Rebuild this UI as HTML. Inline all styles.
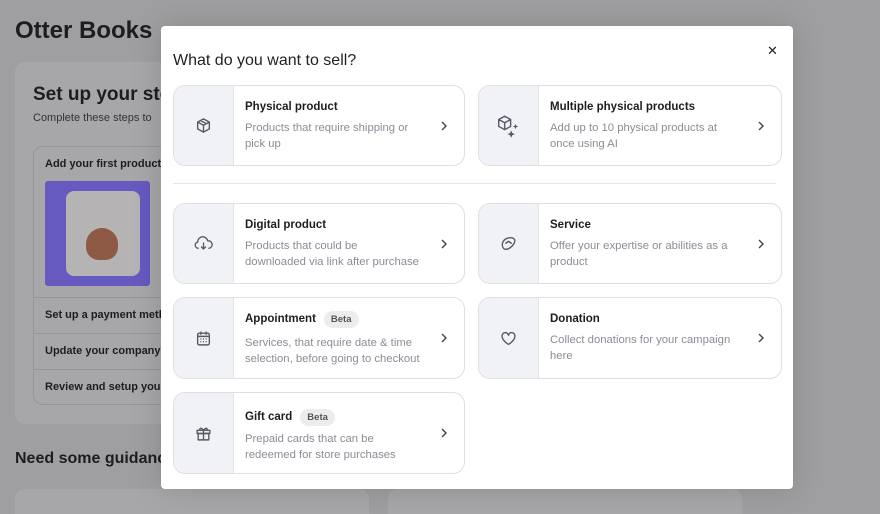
<!DOCTYPE html>
<html><head><style>
*{box-sizing:border-box;margin:0;padding:0}
html,body{width:880px;height:514px;overflow:hidden}
body{background:#9f9fa1;font-family:"Liberation Sans",sans-serif;position:relative}
.abs{position:absolute}
.bgtxt{color:#1d1d1f;font-weight:bold}
.modal{position:absolute;left:161px;top:26px;width:632px;height:463px;background:#fff;border-radius:4px;box-shadow:0 0 30px rgba(0,0,0,.15)}
.card{position:absolute;border:1px solid #dfdfe3;border-radius:12px;overflow:hidden;background:#fff}
.ic{position:absolute;left:0;top:0;bottom:0;width:60px;background:#f1f2f5;border-right:1px solid #e3e4e8;display:flex;align-items:center;justify-content:center}
.t{position:absolute;left:71px;font-size:11.5px;font-weight:bold;color:#1e1e22}
.d{position:absolute;left:71px;font-size:11.3px;color:#8a8d96;line-height:15.5px;width:175px}
.ch{position:absolute;right:16px;top:50%;margin-top:-6px}
.beta{display:inline-block;margin-left:8px;background:#ececee;border-radius:10px;padding:3px 7px;font-size:9.5px;color:#555;font-weight:bold}
svg{display:block}
</style></head><body>
<div class="abs bgtxt" style="left:15px;top:17px;font-size:24px">Otter Books</div>
<div class="abs" style="left:15px;top:62px;width:380px;height:362px;background:#a7a7a9;border-radius:10px"></div>
<div class="abs bgtxt" style="left:33px;top:84px;font-size:19px">Set up your store</div>
<div class="abs" style="left:33px;top:112px;font-size:11px;color:#333">Complete these steps to</div>
<div class="abs" style="left:33px;top:146px;width:360px;height:259px;border:1px solid #969698;border-radius:10px"></div>
<div class="abs bgtxt" style="left:45px;top:158px;font-size:11px">Add your first product</div>
<div class="abs" style="left:45px;top:181px;width:105px;height:105px;background:#6659c0;border-radius:3px"></div>
<div class="abs" style="left:66px;top:191px;width:74px;height:85px;background:#b5b3b3;border-radius:8px"></div>
<div class="abs" style="left:86px;top:228px;width:32px;height:32px;background:#8e5a46;border-radius:50% 50% 40% 40%"></div>
<div class="abs" style="left:33px;top:297px;width:130px;border-top:1px solid #969698"></div>
<div class="abs bgtxt" style="left:45px;top:309px;font-size:11px">Set up a payment method</div>
<div class="abs" style="left:33px;top:333px;width:130px;border-top:1px solid #969698"></div>
<div class="abs bgtxt" style="left:45px;top:345px;font-size:11px">Update your company</div>
<div class="abs" style="left:33px;top:369px;width:130px;border-top:1px solid #969698"></div>
<div class="abs bgtxt" style="left:45px;top:381px;font-size:11px">Review and setup your</div>
<div class="abs bgtxt" style="left:15px;top:450px;font-size:16px">Need some guidance</div>
<div class="abs" style="left:15px;top:489px;width:354px;height:25px;background:#a7a7a9;border-radius:10px 10px 0 0"></div>
<div class="abs" style="left:388px;top:489px;width:354px;height:25px;background:#a7a7a9;border-radius:10px 10px 0 0"></div>

<div class="modal">
<div class="abs" style="left:12px;top:26px;font-size:16px;color:#222">What do you want to sell?</div>
<div class="abs" style="left:606px;top:17px;font-size:13px;color:#222">✕</div>
<div class="abs" style="left:12px;top:157px;width:603px;border-top:1px solid #e6e6e8"></div>
</div>

<div class="card" style="left:173px;top:85px;width:292px;height:81px"><div class="ic"><svg width="17" height="17" viewBox="0 0 16 16" fill="none" stroke="#555a66" stroke-width="1.3" stroke-linejoin="round"><path d="M8 1.8l5.5 3v6.4L8 14.2 2.5 11.2V4.8z M2.5 4.8L8 7.8l5.5-3 M8 7.8v6.4 M5.2 3.3l5.5 3"/></svg></div><div class="t" style="top:15px">Physical product</div><div class="d" style="top:35px">Products that require shipping or pick up</div><svg class="ch" width="8" height="12" viewBox="0 0 8 12"><path d="M2 2l4 4-4 4" stroke="#444" stroke-width="1.4" fill="none"/></svg></div>

<div class="card" style="left:478px;top:85px;width:304px;height:81px"><div class="ic"><svg width="26" height="24" viewBox="0 0 24 22" fill="none" stroke="#555a66" stroke-width="1.3" stroke-linejoin="round"><path d="M8 2l5.5 3v6.4L8 14.4 2.5 11.4V5z M2.5 5L8 8l5.5-3 M8 8v6.4"/><path d="M18 9l.7 1.8 1.8.7-1.8.7L18 14l-.7-1.8-1.8-.7 1.8-.7z M14 15l1 2.5 2.5 1-2.5 1-1 2.5-1-2.5-2.5-1 2.5-1z" fill="#555a66" stroke="none"/></svg></div><div class="t" style="top:15px">Multiple physical products</div><div class="d" style="top:35px">Add up to 10 physical products at once using AI</div><svg class="ch" width="8" height="12" viewBox="0 0 8 12"><path d="M2 2l4 4-4 4" stroke="#444" stroke-width="1.4" fill="none"/></svg></div>

<div class="card" style="left:173px;top:203px;width:292px;height:81px"><div class="ic"><svg width="19" height="17" viewBox="0 0 18 16" fill="none" stroke="#555a66" stroke-width="1.3" stroke-linejoin="round"><path d="M4.5 12.5H3.8A3 3 0 013.5 6.6 4.8 4.8 0 0113 5.5a3.5 3.5 0 011.2 7H13.5 M9 7v6 M6.8 11L9 13.2 11.2 11"/></svg></div><div class="t" style="top:15px">Digital product</div><div class="d" style="top:35px">Products that could be downloaded via link after purchase</div><svg class="ch" width="8" height="12" viewBox="0 0 8 12"><path d="M2 2l4 4-4 4" stroke="#444" stroke-width="1.4" fill="none"/></svg></div>

<div class="card" style="left:478px;top:203px;width:304px;height:81px"><div class="ic"><svg width="17" height="17" viewBox="0 0 16 16" fill="none" stroke="#555a66" stroke-width="1.3" stroke-linejoin="round"><path d="M3 12c-1.5-2-1-6 2-8s7-2 8.5 0-1 6-4 8-5.5 2-6.5 0z M5 8l3-2 3 2"/></svg></div><div class="t" style="top:15px">Service</div><div class="d" style="top:35px;width:190px">Offer your expertise or abilities as a product</div><svg class="ch" width="8" height="12" viewBox="0 0 8 12"><path d="M2 2l4 4-4 4" stroke="#444" stroke-width="1.4" fill="none"/></svg></div>

<div class="card" style="left:173px;top:297px;width:292px;height:82px"><div class="ic"><svg width="17" height="17" viewBox="0 0 16 16" fill="none" stroke="#555a66" stroke-width="1.3"><rect x="2.5" y="3" width="11" height="11" rx="1.5"/><path d="M2.5 6h11 M5.5 1.5v3 M10.5 1.5v3"/><path d="M5 8.5h1M7.5 8.5h1M10 8.5h1M5 11h1M7.5 11h1M10 11h1" stroke-width="1.2"/></svg></div><div class="t" style="top:13px">Appointment<span class="beta">Beta</span></div><div class="d" style="top:38px;width:190px">Services, that require date &amp; time selection, before going to checkout</div><svg class="ch" width="8" height="12" viewBox="0 0 8 12"><path d="M2 2l4 4-4 4" stroke="#444" stroke-width="1.4" fill="none"/></svg></div>

<div class="card" style="left:478px;top:297px;width:304px;height:82px"><div class="ic"><svg width="17" height="17" viewBox="0 0 16 16" fill="none" stroke="#555a66" stroke-width="1.3" stroke-linejoin="round"><path d="M8 13.5S2 10 2 6a3 3 0 016-1 3 3 0 016 1c0 4-6 7.5-6 7.5z"/></svg></div><div class="t" style="top:15px">Donation</div><div class="d" style="top:35px;width:190px">Collect donations for your campaign here</div><svg class="ch" width="8" height="12" viewBox="0 0 8 12"><path d="M2 2l4 4-4 4" stroke="#444" stroke-width="1.4" fill="none"/></svg></div>

<div class="card" style="left:173px;top:392px;width:292px;height:82px"><div class="ic"><svg width="17" height="17" viewBox="0 0 16 16" fill="none" stroke="#555a66" stroke-width="1.3" stroke-linejoin="round"><rect x="2" y="5" width="12" height="3"/><rect x="3" y="8" width="10" height="6"/><path d="M8 5v9 M8 5C6 2 3.5 3 5 5 M8 5c2-3 4.5-2 3 0"/></svg></div><div class="t" style="top:16px">Gift card<span class="beta">Beta</span></div><div class="d" style="top:39px;width:160px">Prepaid cards that can be redeemed for store purchases</div><svg class="ch" width="8" height="12" viewBox="0 0 8 12"><path d="M2 2l4 4-4 4" stroke="#444" stroke-width="1.4" fill="none"/></svg></div>
</body></html>
